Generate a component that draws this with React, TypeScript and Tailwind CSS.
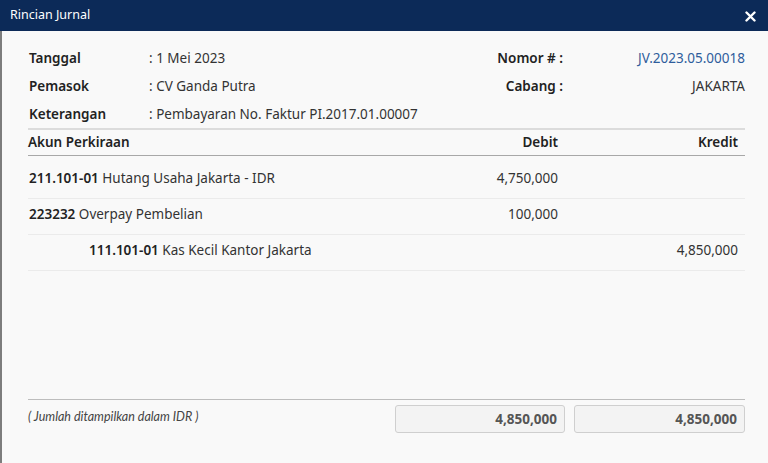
import React from "react";

const rows = [
  { code: "211.101-01", name: "Hutang Usaha Jakarta - IDR", debit: "4,750,000", kredit: "", indent: false },
  { code: "223232", name: "Overpay Pembelian", debit: "100,000", kredit: "", indent: false },
  { code: "111.101-01", name: "Kas Kecil Kantor Jakarta", debit: "", kredit: "4,850,000", indent: true },
];

export default function App() {
  return (
    <div
      className="w-[768px] h-[463px] flex flex-col bg-[#f9f9f9] overflow-hidden text-[#333]"
      style={{ fontFamily: '"Noto Sans", "Open Sans", sans-serif' }}
    >
      <div className="h-[31px] bg-[#0c2a58] flex items-center justify-between pl-[10px] pr-[12px] shrink-0">
        <span className="text-white text-[12.5px]">Rincian Jurnal</span>
        <svg width="11" height="11" viewBox="0 0 11 11" className="mt-[1px]">
          <path d="M1.5 1.5 L9.5 9.5 M9.5 1.5 L1.5 9.5" stroke="#fff" strokeWidth="2.4" strokeLinecap="round" />
        </svg>
      </div>
      <div className="flex-1 flex flex-col border-l-2 border-[#7d7d7d] pl-[26px] pr-[23px] pt-[13px] text-[13.5px]">
        <div className="flex">
          <div className="flex-1 flex flex-col">
            <div className="h-[28px] flex items-center pl-[1px]">
              <span className="w-[120px] font-semibold text-[#222]">Tanggal</span>
              <span>: 1 Mei 2023</span>
            </div>
            <div className="h-[28px] flex items-center pl-[1px]">
              <span className="w-[120px] font-semibold text-[#222]">Pemasok</span>
              <span>: CV Ganda Putra</span>
            </div>
            <div className="h-[28px] flex items-center pl-[1px]">
              <span className="w-[120px] font-semibold text-[#222]">Keterangan</span>
              <span>: Pembayaran No. Faktur PI.2017.01.00007</span>
            </div>
          </div>
          <div className="flex flex-col">
            <div className="h-[28px] flex items-center">
              <span className="font-semibold text-[#222] text-right">Nomor # :</span>
              <span className="w-[182px] text-right text-[#2f5d9c]">JV.2023.05.00018</span>
            </div>
            <div className="h-[28px] flex items-center justify-end">
              <span className="font-semibold text-[#222] text-right">Cabang :</span>
              <span className="w-[182px] text-right">JAKARTA</span>
            </div>
          </div>
        </div>
        <div className="border-t-2 border-[#dcdcdc] h-[28px] flex items-center border-b border-b-[#a8a8a8] font-semibold text-[#222]">
          <span className="flex-1">Akun Perkiraan</span>
          <span className="w-[170px] text-right pr-[7px]">Debit</span>
          <span className="w-[9px]" />
          <span className="w-[171px] text-right pr-[7px]">Kredit</span>
        </div>
        <div className="mt-[7px] flex flex-col">
          {rows.map((r, i) => (
            <div key={i} className="h-[36px] flex items-center pb-[4px] border-b border-[#ebebeb]">
              <span className={`flex-1 ${r.indent ? "pl-[61px]" : "pl-[1px]"}`}>
                <span className="font-semibold text-[#222]">{r.code}</span> {r.name}
              </span>
              <span className="w-[170px] text-right pr-[7px]">{r.debit}</span>
              <span className="w-[9px]" />
              <span className="w-[171px] text-right pr-[7px]">{r.kredit}</span>
            </div>
          ))}
        </div>
        <div className="flex-1" />
        <div className="border-t border-[#bdbdbd] pt-[5px] pb-[30px] flex items-start">
          <span
            className="flex-1 italic text-[12.5px] text-[#444] mt-[3px]"
            style={{ fontFamily: '"Lato", "Noto Sans", sans-serif' }}
          >
            ( Jumlah ditampilkan dalam IDR )
          </span>
          <div className="w-[170px] h-[28px] rounded-[3px] border border-[#cfcfcf] bg-[#f3f3f3] flex items-center justify-end pr-[7px] font-bold text-[#555]">
            4,850,000
          </div>
          <span className="w-[9px]" />
          <div className="w-[171px] h-[28px] rounded-[3px] border border-[#cfcfcf] bg-[#f3f3f3] flex items-center justify-end pr-[7px] font-bold text-[#555]">
            4,850,000
          </div>
        </div>
      </div>
    </div>
  );
}
